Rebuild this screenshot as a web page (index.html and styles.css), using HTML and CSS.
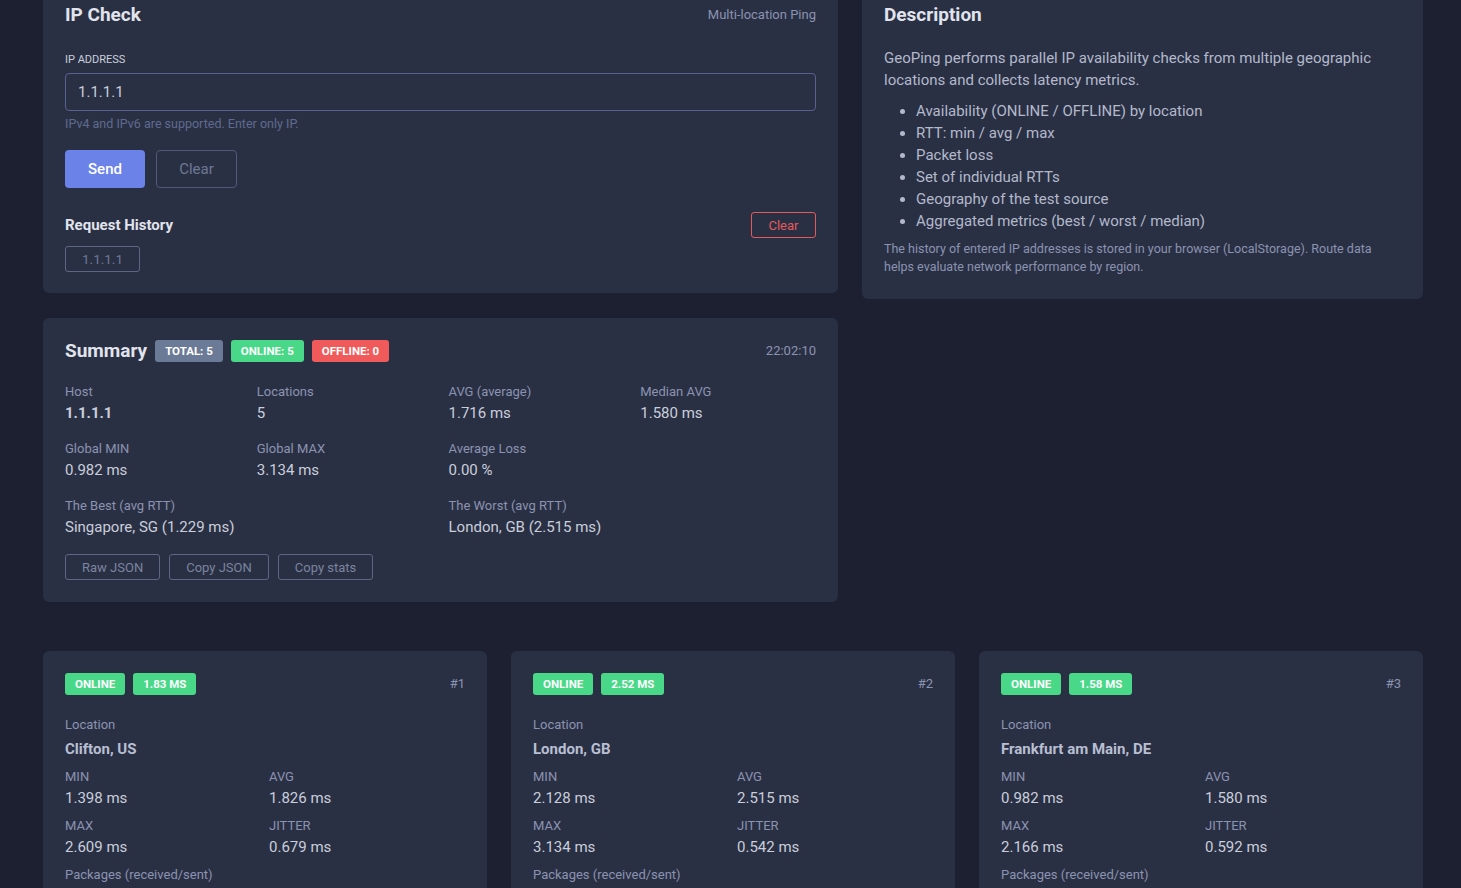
FILE: index.html
```html
<!DOCTYPE html>
<html lang="en">
<head>
    <meta charset="UTF-8">
    <meta name="viewport" content="width=device-width, initial-scale=1.0">
    <title>GeoPing</title>
    <link rel="stylesheet" href="styles.css">
</head>
<body>
<div class="page">
    <div class="top-grid">
        <div class="left-col">
            <div class="card check-card">
                <div class="card-head">
                    <h2>IP Check</h2>
                    <span class="muted">Multi-location Ping</span>
                </div>
                <label class="field-label" for="ipInput">IP ADDRESS</label>
                <input type="text" id="ipInput" class="ip-input" value="1.1.1.1">
                <div class="hint">IPv4 and IPv6 are supported. Enter only IP.</div>
                <div class="actions">
                    <button class="btn btn-primary">Send</button>
                    <button class="btn btn-ghost">Clear</button>
                </div>
                <div class="history-head">
                    <h3>Request History</h3>
                    <button class="btn-small btn-danger">Clear</button>
                </div>
                <div class="history">
                    <button class="btn-small chip">1.1.1.1</button>
                </div>
            </div>

            <div class="card summary-card">
                <div class="card-head">
                    <div class="summary-title">
                        <h2>Summary</h2>
                        <span class="badge badge-gray">TOTAL: 5</span>
                        <span class="badge badge-green">ONLINE: 5</span>
                        <span class="badge badge-red">OFFLINE: 0</span>
                    </div>
                    <span class="muted">22:02:10</span>
                </div>
                <div class="stats">
                    <div class="stat"><div class="stat-label">Host</div><div class="stat-value bold">1.1.1.1</div></div>
                    <div class="stat"><div class="stat-label">Locations</div><div class="stat-value">5</div></div>
                    <div class="stat"><div class="stat-label">AVG (average)</div><div class="stat-value">1.716 ms</div></div>
                    <div class="stat"><div class="stat-label">Median AVG</div><div class="stat-value">1.580 ms</div></div>
                    <div class="stat"><div class="stat-label">Global MIN</div><div class="stat-value">0.982 ms</div></div>
                    <div class="stat"><div class="stat-label">Global MAX</div><div class="stat-value">3.134 ms</div></div>
                    <div class="stat"><div class="stat-label">Average Loss</div><div class="stat-value">0.00 %</div></div>
                    <div class="stat"></div>
                    <div class="stat wide"><div class="stat-label">The Best (avg RTT)</div><div class="stat-value">Singapore, SG (1.229 ms)</div></div>
                    <div class="stat wide"><div class="stat-label">The Worst (avg RTT)</div><div class="stat-value">London, GB (2.515 ms)</div></div>
                </div>
                <div class="tools">
                    <button class="btn-small tool">Raw JSON</button>
                    <button class="btn-small tool">Copy JSON</button>
                    <button class="btn-small tool">Copy stats</button>
                </div>
            </div>
        </div>

        <div class="right-col">
            <div class="card desc-card">
                <h2>Description</h2>
                <p class="desc-text">GeoPing performs parallel IP availability checks from multiple geographic locations and collects latency metrics.</p>
                <ul class="desc-list">
                    <li>Availability (ONLINE / OFFLINE) by location</li>
                    <li>RTT: min / avg / max</li>
                    <li>Packet loss</li>
                    <li>Set of individual RTTs</li>
                    <li>Geography of the test source</li>
                    <li>Aggregated metrics (best / worst / median)</li>
                </ul>
                <p class="desc-note">The history of entered IP addresses is stored in your browser (LocalStorage). Route data helps evaluate network performance by region.</p>
            </div>
        </div>
    </div>

    <div class="results">
        <div class="card loc-card">
            <div class="card-head">
                <div class="loc-badges">
                    <span class="badge badge-green">ONLINE</span>
                    <span class="badge badge-green">1.83 MS</span>
                </div>
                <span class="muted">#1</span>
            </div>
            <div class="stat-label">Location</div>
            <div class="loc-name">Clifton, US</div>
            <div class="loc-stats">
                <div><div class="stat-label">MIN</div><div class="stat-value">1.398 ms</div></div>
                <div><div class="stat-label">AVG</div><div class="stat-value">1.826 ms</div></div>
                <div><div class="stat-label">MAX</div><div class="stat-value">2.609 ms</div></div>
                <div><div class="stat-label">JITTER</div><div class="stat-value">0.679 ms</div></div>
            </div>
            <div class="stat-label">Packages (received/sent)</div>
        </div>
        <div class="card loc-card">
            <div class="card-head">
                <div class="loc-badges">
                    <span class="badge badge-green">ONLINE</span>
                    <span class="badge badge-green">2.52 MS</span>
                </div>
                <span class="muted">#2</span>
            </div>
            <div class="stat-label">Location</div>
            <div class="loc-name">London, GB</div>
            <div class="loc-stats">
                <div><div class="stat-label">MIN</div><div class="stat-value">2.128 ms</div></div>
                <div><div class="stat-label">AVG</div><div class="stat-value">2.515 ms</div></div>
                <div><div class="stat-label">MAX</div><div class="stat-value">3.134 ms</div></div>
                <div><div class="stat-label">JITTER</div><div class="stat-value">0.542 ms</div></div>
            </div>
            <div class="stat-label">Packages (received/sent)</div>
        </div>
        <div class="card loc-card">
            <div class="card-head">
                <div class="loc-badges">
                    <span class="badge badge-green">ONLINE</span>
                    <span class="badge badge-green">1.58 MS</span>
                </div>
                <span class="muted">#3</span>
            </div>
            <div class="stat-label">Location</div>
            <div class="loc-name">Frankfurt am Main, DE</div>
            <div class="loc-stats">
                <div><div class="stat-label">MIN</div><div class="stat-value">0.982 ms</div></div>
                <div><div class="stat-label">AVG</div><div class="stat-value">1.580 ms</div></div>
                <div><div class="stat-label">MAX</div><div class="stat-value">2.166 ms</div></div>
                <div><div class="stat-label">JITTER</div><div class="stat-value">0.592 ms</div></div>
            </div>
            <div class="stat-label">Packages (received/sent)</div>
        </div>
    </div>
</div>
</body>
</html>
```

FILE: styles.css
```css
* {
    box-sizing: border-box;
}
body {
    margin: 0;
    background-color: #1c2030;
    color: #c9cedb;
    font-family: Roboto, "Liberation Sans", sans-serif;
    font-size: 15px;
    line-height: 22px;
    overflow: hidden;
}
.page {
    width: 1380px;
    margin: -19px 0 0 43px;
}
.top-grid {
    display: grid;
    grid-template-columns: 795px 561px;
    gap: 24px;
    align-items: start;
}
.left-col {
    display: flex;
    flex-direction: column;
    gap: 25px;
}
.card {
    background-color: #2a3044;
    border-radius: 6px;
    padding: 22px;
}
h2 {
    margin: 0;
    font-size: 19px;
    line-height: 24px;
    font-weight: 700;
    color: #e1e4ec;
}
h3 {
    margin: 0;
    font-size: 15px;
    line-height: 22px;
    font-weight: 700;
    color: #e1e4ec;
}
.card-head {
    display: flex;
    justify-content: space-between;
    align-items: center;
}
.muted {
    font-size: 13px;
    line-height: 18px;
    color: #8a93b0;
}
.field-label {
    display: block;
    margin-top: 25px;
    font-size: 11px;
    line-height: 16px;
    color: #c9cedb;
}
.ip-input {
    display: block;
    width: 100%;
    height: 38px;
    margin-top: 5px;
    padding: 0 12px;
    background: #2a3044;
    border: 1px solid #56628f;
    border-radius: 4px;
    color: #c9cedb;
    font-family: inherit;
    font-size: 15px;
}
.hint {
    margin-top: 4px;
    font-size: 12.5px;
    line-height: 18px;
    color: #5f6b8e;
}
.actions {
    display: flex;
    gap: 11px;
    margin-top: 17px;
}
.btn {
    height: 38px;
    border-radius: 4px;
    font-family: inherit;
    font-size: 15px;
    cursor: pointer;
}
.btn-primary {
    background-color: #6b83e9;
    border: none;
    color: #fff;
    font-weight: 500;
    width: 80px;
    padding: 0;
}
.btn-ghost {
    background: transparent;
    border: 1px solid #4f5a78;
    color: #6d7894;
    width: 81px;
    padding: 0;
}
.history-head {
    display: flex;
    justify-content: space-between;
    align-items: center;
    margin-top: 24px;
}
.history {
    display: flex;
    margin-top: 8px;
}
.check-card {
    padding-bottom: 21px;
}
.btn-small {
    height: 26px;
    padding: 0 16px;
    background: transparent;
    border-radius: 3px;
    font-family: inherit;
    font-size: 13px;
    cursor: pointer;
}
.btn-danger {
    border: 1px solid #e25a5a;
    color: #e25a5a;
    width: 65px;
    padding: 0;
}
.chip {
    border: 1px solid #5c6784;
    color: #6d7894;
    width: 75px;
    padding: 0;
    font-size: 13.5px;
}
.summary-card {
    padding-top: 21px;
}
.summary-title {
    display: flex;
    align-items: center;
    gap: 8px;
}
.badge {
    display: inline-block;
    height: 22px;
    line-height: 22px;
    padding: 0 10px;
    border-radius: 3px;
    font-size: 11.5px;
    font-weight: 700;
    color: #fff;
}
.badge-gray {
    background-color: #6b7a96;
}
.badge-green {
    background-color: #48d887;
}
.badge-red {
    background-color: #f05a5a;
}
.stats {
    display: grid;
    grid-template-columns: repeat(4, 1fr);
    column-gap: 16px;
    row-gap: 16px;
    margin-top: 20px;
}
.stat.wide {
    grid-column: span 2;
}
.stat-label {
    font-size: 13px;
    line-height: 18px;
    color: #8a93b0;
}
.stat-value {
    margin-top: 1px;
    font-size: 15px;
    line-height: 22px;
    color: #c9cedb;
}
.bold {
    font-weight: 700;
}
.tools {
    display: flex;
    gap: 9px;
    margin-top: 16px;
}
.tool {
    border: 1px solid #5c6784;
    color: #7a849f;
}
.desc-card {
    padding-bottom: 23px;
}
.desc-text {
    margin: 20px 0 0;
    line-height: 22px;
    color: #b3b9cb;
}
.desc-list {
    margin: 9px 0 0;
    padding-left: 32px;
    line-height: 22px;
    color: #b3b9cb;
}
.desc-note {
    margin: 8px 0 0;
    font-size: 12.5px;
    line-height: 18px;
    color: #8a93b0;
}
.results {
    display: grid;
    grid-template-columns: repeat(3, 1fr);
    gap: 24px;
    margin-top: 49px;
}
.loc-card {
    height: 260px;
}
.loc-badges {
    display: flex;
    gap: 8px;
}
.loc-card .card-head {
    margin-bottom: 21px;
}
.loc-name {
    margin: 4px 0 8px;
    font-size: 15px;
    font-weight: 700;
    line-height: 22px;
    color: #b8bfd2;
}
.loc-stats {
    display: grid;
    grid-template-columns: 1fr 1fr;
    column-gap: 8px;
    row-gap: 8px;
    margin-bottom: 8px;
}
```
